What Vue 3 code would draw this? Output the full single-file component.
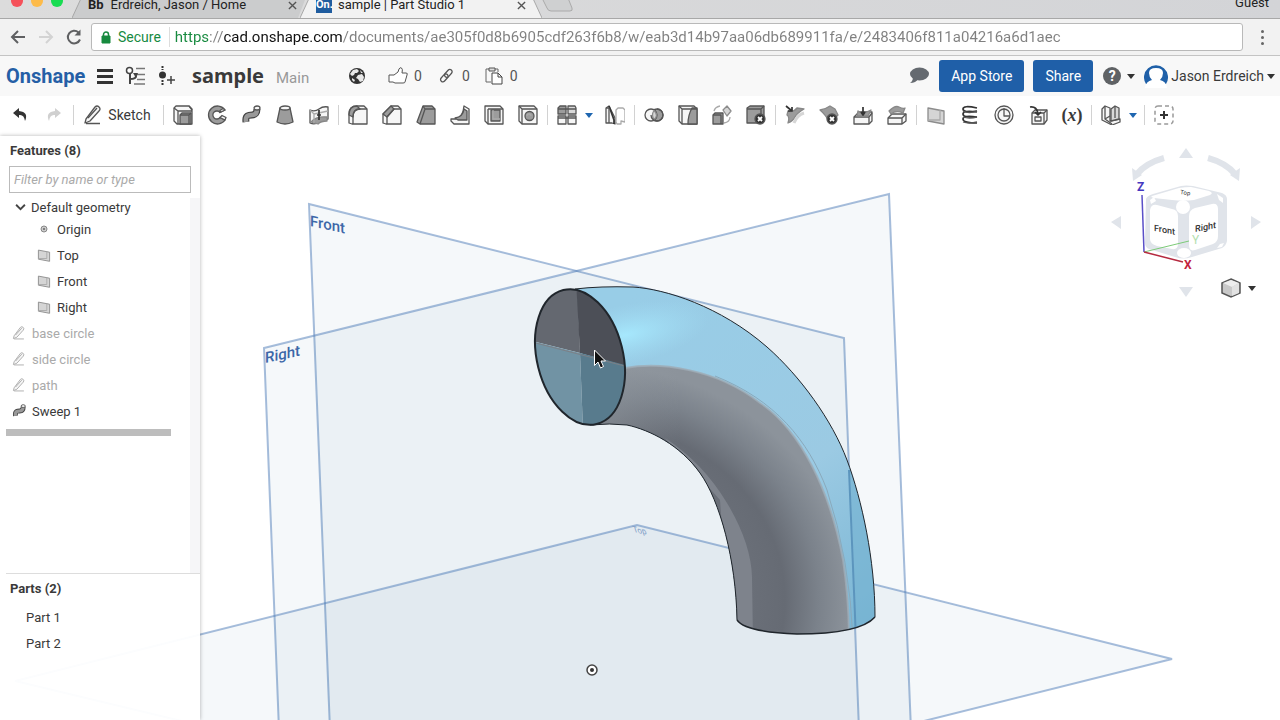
<script setup>
const sweep = [
  ['M5 17c-1-7 3-7 6-7s5-2 5-6', 'tube'],
  ['M5 17c-1-7 3-7 6-7s5-2 5-6', 'core'],
  ['M13 3a3 2 0 1 1 6 0a3 2 0 1 1-6 0', 'w'],
]
const pencil = [
  ['M3 14L12 2q2-2 4 0t0 4L7 16l-5 2z', 'w'],
  ['M5 13L14 3M3 18.500h14', 'n'],
]
const plane = [['M2 3l16 3v13L2 16z', 'p'], ['M2 15l12 0V5', 'lt']]
const groups = [
  {
    items: [
      { name: 'Extrude', paths: [['M1 3l2-2h13l3 3v15H4l-3-3z', 'w'], ['M1 3l4 3h14M5 6v13M16 1l3 4', 'n'], ['M7 10l2-2h9v11H7z', 'g'], ['M7 10h9v9M16 10l2-2', 'n']] },
      { name: 'Revolve', paths: [['M18 5A9 9 0 1 0 18 15L13 12.500A4 4 0 1 1 13 7.500z', 'g'], ['M18 5l-5 2.500v-2l3-2zM18 15l-5-2.500 2-2 4 2z', 'w']] },
      { name: 'Sweep', paths: sweep },
      { name: 'Loft', paths: [['M5 3l-3 14q8 4 16 0L15 3z', 'g'], ['M5 3a5 2 0 1 1 10 0a5 2 0 1 1-10 0', 'w']] },
      { name: 'Thicken', paths: [['M1 5q5 2 9-1t9-2v12q-5 0-9 3t-9 1z', 'w'], ['M2 17q5-6 16-5v4q-6 0-9 3z', 'gs'], ['M1 5l4 4 14-3M5 9v9', 'lt'], ['M10 5v10M8 10h4', 'b']] },
    ],
  },
  {
    items: [
      { name: 'Fillet', paths: [['M1 18V9q0-8 8-8h7l3 3v15H4z', 'w'], ['M1 10q0-9 8-9l3 3q-7 0-7 8z', 'g'], ['M5 19v-7q0-8 7-8h7', 'n']] },
      { name: 'Chamfer', paths: [['M1 18V9l8-8h7l3 3v15H4z', 'w'], ['M1 9l8-8 3 3-7 8z', 'g'], ['M5 19v-7l7-8h7', 'n']] },
      { name: 'Draft', paths: [['M7 1h9l3 3v15H4l-3-2z', 'g'], ['M9 4h10M9 4L4 19M7 1l2 3', 'n']] },
      { name: 'Rib', paths: [['M14 1l5 3v15H4l-3-3 0-2h5q7-2 8-13z', 'w'], ['M5 13q8-1 9-9l3 2v9H8z', 'g']] },
      { name: 'Shell', paths: [['M1 1h15l3 3v15H4l-3-3z', 'w'], ['M4 4h15M4 4v15', 'n'], ['M7 5h9v11H7z', 'g'], ['M9 5v9h7', 'lt']] },
      { name: 'Hole', paths: [['M1 1h15l3 3v15H4l-3-3z', 'w'], ['M4 4h15M4 4v15M1 1l3 3', 'n'], ['M7 11a4.500 4.500 0 1 1 9 0a4.500 4.500 0 1 1-9 0', 'g'], ['M9 11a2 2 0 1 1 4 0', 'lt']] },
    ],
  },
  {
    items: [
      { name: 'Linear pattern', caret: true, paths: [['M1 3l2-2h6v8H1z', 'g'], ['M11 1h7l1 2v6h-8z', 'p2'], ['M1 11h8v8H1zM11 11h8v8h-8z', 'w'], ['M1 4h18M1 13h18', 'n']] },
      { name: 'Mirror', paths: [['M1 3l3-2 6 12v6l-3-1H1z', 'w'], ['M4 1l5 14v4', 'b'], ['M1 3h3v15', 'n'], ['M11 17V5l2-2h5l2 2v12l-4-1v3h-4z', 'lt']] },
    ],
  },
  {
    items: [
      { name: 'Boolean', paths: [['M7 10a6 6 0 1 1 12 0a6 6 0 1 1-12 0', 'g'], ['M1 10a6 6 0 1 1 12 0a6 6 0 1 1-12 0', 'w'], ['M10 5.500q-3 4.500 0 9q5-4 0-9', 'p'], ['M7 10a6 6 0 1 0 6-6', 'n']] },
      { name: 'Split', paths: [['M1 1h15l3 3v15H4l-3-3z', 'w'], ['M14 3h5v16h-9q0-9 4-16z', 'g'], ['M1 1l3 3h15M4 4v15', 'n']] },
      { name: 'Transform', paths: [['M1 10l2-2h8v11H1z', 'g'], ['M1 10h8v9', 'n'], ['M11 5l4-4 4 5-4 5z', 'p'], ['M2 6q1-4 6-5M12 18q6-1 6-6', 'lt']] },
      { name: 'Delete part', paths: [['M1 3l3-2h14v14l-3 3H1z', 'g'], ['M1 4h14v14M15 4l3-3', 'n'], ['M9 14a5 5 0 1 1 10 0a5 5 0 1 1-10 0', 'k'], ['M12 12l4 4M16 12l-4 4', 'x']] },
    ],
  },
  {
    items: [
      { name: 'Modify fillet', paths: [['M3 6q5 2 9-3l7 1q-7 4-9 8t-7 6q2-6-1-8z', 'gs'], ['M9 18q3-8 10-10', 'lt2'], ['M1 1l6 5M7 2v4H3', 'b']] },
      { name: 'Delete face', paths: [['M1 5q6-1 10-4l5 3 3 6-8 8q-4-8-10-13z', 'gs'], ['M8 14a5 5 0 1 1 10 0a5 5 0 1 1-10 0', 'k'], ['M11 12l4 4M15 12l-4 4', 'x']] },
      { name: 'Move face', paths: [['M1 12l5-5h13v9l-3 3H1z', 'w'], ['M1 12h15v7M16 12l3-4', 'n'], ['M5 6q4 4 13-1l-3 6H4z', 'gs'], ['M10 2v7M8 7l2 3 2-3', 'b']] },
      { name: 'Replace face', paths: [['M1 13l4-4h14v7l-4 3H1z', 'w'], ['M1 13h14v6M15 13l4-4', 'n'], ['M2 6q6-6 10-4t6 1l-2 5q-7-3-12 1z', 'gs']] },
    ],
  },
  {
    items: [
      { name: 'Plane', paths: plane },
      { name: 'Helix', paths: [['M17 3Q3 0 3 4t14 2M17 7Q3 5 3 9t14 3M17 12Q3 10 3 14t14 4', 'b'], ['M3 6q6 3 14 0M3 12q6 2 14 0M3 17q6 2 14 0', 'n']] },
      { name: 'Measure', paths: [['M1 10a9 9 0 1 1 18 0a9 9 0 1 1-18 0', 'w'], ['M4 10a6 6 0 1 1 12 0a6 6 0 1 1-12 0M10 3v8h6', 'n']] },
      { name: 'Derived', paths: [['M4 8l3-3h12v10l-3 4H4z', 'w'], ['M4 8h12v11M16 8l3-3M7 12h6v4H7z', 'n'], ['M2 2q7-1 8 7M7 7l3 3 3-3', 'b']] },
      { name: 'Variable', text: '(x)' },
    ],
  },
  {
    items: [
      { name: 'Sheet metal', caret: true, paths: [['M1 4l3-3 5 2v13l10-2v3l-8 3-10-5z', 'w'], ['M10 4l4-3 4 2v11l-8 2z', 'p2'], ['M4 1v13l7 5M14 1v12M4 14l5-3', 'n']] },
    ],
  },
]
const tree = [
  { label: 'Origin', kind: 'origin' },
  { label: 'Top', kind: 'plane' },
  { label: 'Front', kind: 'plane' },
  { label: 'Right', kind: 'plane' },
]
const features = [
  { label: 'base circle', hidden: true, paths: pencil },
  { label: 'side circle', hidden: true, paths: pencil },
  { label: 'path', hidden: true, paths: pencil },
  { label: 'Sweep 1', hidden: false, paths: sweep },
]
const parts = ['Part 1', 'Part 2']
const url = 'https://cad.onshape.com/documents/ae305f0d8b6905cdf263f6b8/w/eab3d14b97aa06db689911fa/e/2483406f811a04216a6d1aec'
</script>

<template>
  <div class="page">
    <div class="tabstrip">
      <div class="lights"><i class="red"></i><i class="amber"></i><i class="green"></i></div>
      <div class="tab tab-back">
        <svg class="tab-shape" viewBox="0 0 236 28" preserveAspectRatio="none"><path d="M0 28L12 0H236L226 28z" fill="#cbcccd" /><path d="M0 28L12 0" stroke="#a5a5a5" fill="none" /></svg>
        <b class="bb">Bb</b><span class="tab-title">Erdreich, Jason / Home</span>
        <button class="close" aria-label="Close tab"><svg viewBox="0 0 10 10"><path d="M1 1l8 8M9 1L1 9" /></svg></button>
      </div>
      <div class="tab tab-front">
        <svg class="tab-shape" viewBox="0 0 242 28" preserveAspectRatio="none"><path d="M0 28L12 0H230L242 28z" fill="#f2f2f2" /><path d="M0 28L12 0M230 0L242 28" stroke="#a5a5a5" fill="none" /></svg>
        <span class="on">On.</span><span class="tab-title">sample | Part Studio 1</span>
        <button class="close" aria-label="Close tab"><svg viewBox="0 0 10 10"><path d="M1 1l8 8M9 1L1 9" /></svg></button>
      </div>
      <svg class="newtab" viewBox="0 0 36 20"><path d="M0 0l5 10q1 3 4 3h19q3 0 2-3L26 0z" fill="#cfd0d1" stroke="#aaa" /></svg>
      <span class="guest">Guest</span>
    </div>

    <div class="navbar">
      <button aria-label="Back"><svg viewBox="0 0 18 18"><path d="M16 9H3M9 3L3 9l6 6" stroke="#5f6062" /></svg></button>
      <button aria-label="Forward"><svg viewBox="0 0 18 18"><path d="M2 9h13M9 3l6 6-6 6" stroke="#d3d3d3" /></svg></button>
      <button aria-label="Reload"><svg viewBox="0 0 18 18"><path d="M15 11.500A6.300 6.300 0 1 1 13.500 4.500" stroke="#5f6062" /><path d="M15.500 1.500v6h-6z" fill="#5f6062" /></svg></button>
      <div class="address">
        <svg class="lock" viewBox="0 0 10 13"><path d="M1 5h8v7H1z" fill="#178a3f" stroke="#178a3f" /><path d="M2.500 5V3.500a2.500 2.500 0 0 1 5 0V5" fill="none" stroke="#178a3f" stroke-width="1.500" /></svg>
        <span class="secure">Secure</span>
        <input class="url" type="text" aria-label="Address" :value="url" spellcheck="false" />
      </div>
      <button class="menu" aria-label="Browser menu"><i></i><i></i><i></i></button>
    </div>

    <header class="header">
      <a class="logo" href="#">Onshape</a>
      <button class="ham" aria-label="Menu"><i></i><i></i><i></i></button>
      <button class="tree-btn" aria-label="Versions and history">
        <svg viewBox="0 0 22 20"><path d="M5 8v10M5 13q6 0 6-3" fill="none" stroke="#444" stroke-width="2" /><circle cx="4.500" cy="4.500" r="3" fill="#fff" stroke="#444" stroke-width="1.500" /><path d="M11 2.500h9M12 8.500h8M12 13.500h8M9 18h11" stroke="#777" stroke-width="1.500" /><path d="M8 7h5l-2 5z" fill="#444" /></svg>
      </button>
      <button class="insert-btn" aria-label="Create version">
        <svg viewBox="0 0 18 20"><path d="M4.500 0v4M4.500 14v5" stroke="#333" stroke-width="2" stroke-dasharray="2 1" /><circle cx="4.500" cy="9" r="3.500" fill="#333" /><path d="M9 14h8M13 10v8" stroke="#444" stroke-width="1.500" /></svg>
      </button>
      <h1>sample</h1>
      <span class="main-label">Main</span>
      <svg class="globe" viewBox="0 0 16 16"><circle cx="8" cy="8" r="8" fill="#333" /><path d="M4 2l4-1 2 2-2 2H6L5 7 3 8 1 6zM9 7l4-1 2 3-1 4-3 1-2-3-2-1zM11 2l3 3-2 0zM3 10l3 2-1 2-2-2z" fill="#e8e8e8" /></svg>
      <button class="stat"><svg width="20" height="18" viewBox="0 0 20 18"><path d="M1 8l5 0 4-3 1-3q1-2 2.500-1t.5 5h4q2 0 1 2l-2 7q0 1-2 1H7l-2-1H1z" fill="#fff" stroke="#555" /></svg>0</button>
      <button class="stat link"><svg width="14" height="18" viewBox="0 0 14 18"><g fill="none" stroke="#555" stroke-width="1.300" transform="translate(7 9) rotate(42)"><rect x="-2.300" y="-8" width="4.600" height="9" rx="2.300" /><rect x="-2.300" y="-2" width="4.600" height="9" rx="2.300" /></g></svg>0</button>
      <button class="stat clip"><svg width="18" height="18" viewBox="0 0 18 18"><path d="M5 2H1v13h5M9 2h4v3" fill="none" stroke="#666" /><path d="M4 1h6v3H4z" fill="#ddd" stroke="#555" /><path d="M7 6h6l4 4v7H7z" fill="#fff" stroke="#444" /><path d="M13 6v4h4" fill="none" stroke="#444" /></svg>0</button>
      <div class="spacer"></div>
      <button class="chat" aria-label="Comments"><svg viewBox="0 0 20 18"><ellipse cx="10.500" cy="7" rx="9.500" ry="6.500" fill="#656a70" /><path d="M4 10q0 4-3 6 6 0 8-4z" fill="#656a70" /></svg></button>
      <button class="primary store">App Store</button>
      <button class="primary share">Share</button>
      <button class="help" aria-label="Help"><span class="q">?</span><i class="caret"></i></button>
      <button class="user">
        <svg viewBox="0 0 24 24"><path d="M2 20A12 12 0 1 1 22 20z" fill="#1f60a8" /><path d="M1 24q1-7 7-8-3-3-3-7 0-5 7-5t7 5q0 4-3 7 6 1 7 8z" fill="#fff" /></svg>
        <span>Jason Erdreich</span><i class="caret"></i>
      </button>
    </header>

    <div class="toolbar">
      <button class="tool" aria-label="Undo"><svg viewBox="0 0 20 20"><path d="M9 3L3 8l6 5v-3q5-1 6 6 4-9-6-10z" fill="#333" /></svg></button>
      <button class="tool" aria-label="Redo"><svg viewBox="0 0 20 20"><path d="M11 3l6 5-6 5v-3q-5-1-6 6-4-9 6-10z" fill="#d0d0d0" /></svg></button>
      <i class="sep"></i>
      <button class="sketch"><svg class="ico" viewBox="0 0 20 20"><path v-for="(p, k) in pencil" :key="k" :d="p[0]" :class="p[1]" /></svg>Sketch</button>
      <template v-for="(g, i) in groups" :key="i">
        <i class="sep"></i>
        <template v-for="t in g.items" :key="t.name">
          <button class="tool" :aria-label="t.name">
            <span v-if="t.text" class="var">(<em>x</em>)</span>
            <svg v-else class="ico" viewBox="0 0 20 20"><path v-for="(p, k) in t.paths" :key="k" :d="p[0]" :class="p[1]" /></svg>
          </button>
          <button v-if="t.caret" class="drop" :aria-label="t.name + ' options'"><i class="caret blue"></i></button>
        </template>
      </template>
      <i class="sep"></i>
      <button class="tool" aria-label="Add custom features"><svg viewBox="0 0 20 20"><rect x="1" y="1" width="18" height="18" rx="3" fill="none" stroke="#999" stroke-width="1.500" stroke-dasharray="4 3" /><path d="M6 10h8M10 6v8" stroke="#333" stroke-width="2" /></svg></button>
    </div>

    <main class="workspace">
      <svg class="scene" viewBox="0 136 1280 584" preserveAspectRatio="xMidYMid slice">
        <defs>
          <radialGradient id="steel" gradientUnits="userSpaceOnUse" cx="0" cy="0" r="1" gradientTransform="translate(590 600) scale(260 235)">
            <stop offset=".55" stop-color="#6c717a" /><stop offset=".75" stop-color="#666b74" /><stop offset=".88" stop-color="#7b828b" /><stop offset="1" stop-color="#8c939b" />
          </radialGradient>
          <linearGradient id="sky" gradientUnits="userSpaceOnUse" x1="640" y1="290" x2="870" y2="620">
            <stop offset="0" stop-color="#98cde7" /><stop offset=".6" stop-color="#9bcae3" /><stop offset="1" stop-color="#7bb6d4" />
          </linearGradient>
          <radialGradient id="shine" gradientUnits="userSpaceOnUse" cx="0" cy="0" r="1" gradientTransform="translate(625 335) rotate(-12) scale(85 30)">
            <stop offset="0" stop-color="#a6e8fd" /><stop offset="1" stop-color="#a2dcf3" stop-opacity="0" />
          </radialGradient>
          <linearGradient id="glint" gradientUnits="userSpaceOnUse" x1="612" y1="0" x2="680" y2="0">
            <stop offset="0" stop-color="#949ba2" stop-opacity=".5" /><stop offset="1" stop-color="#949ba2" stop-opacity="0" />
          </linearGradient>
          <clipPath id="tubeClip"><path d="M575 289Q600 286 633 287C665 289 720 306 767 347C800 376 832 420 847 460S875 560 875 617Q860 634 797 634Q745 632 737 620C736 560 720 501 700 473C680 445 650 430 627 425Q610 423 590 425z" /></clipPath>
          <clipPath id="capClip"><ellipse cx="580" cy="357" rx="43" ry="69" transform="rotate(-14 580 357)" /></clipPath>
        </defs>
        <g class="planes">
          <path d="M309 204L844 338L859 730H330z" />
          <path d="M264 348L889 194L911 730H279z" />
          <path d="M15 681L637 525L1172 659L560 812z" />
        </g>
        <text class="plane-name" transform="translate(310 226) skewY(12)">Front</text>
        <text class="plane-name" transform="translate(265 363) skewY(-12)">Right</text>
        <text class="tiny" transform="translate(634 532) rotate(12) skewX(30)">Top</text>
        <g clip-path="url(#tubeClip)">
          <path d="M530 270H880V640H530z" fill="url(#sky)" />
          <path d="M530 270H880V440H530z" fill="url(#shine)" />
          <path d="M849 450L857 640H880V450z" fill="#77b3d2" opacity=".65" />
          <path d="M600 372L625 368C660 362 715 368 760 403C800 430 830 490 843 560Q849 600 849 640H720L580 430z" fill="url(#steel)" />
          <path d="M600 372L625 368Q665 362 700 373V450H580z" fill="url(#glint)" />
          <path d="M625 368C660 362 715 368 760 403C800 430 830 490 843 560Q849 600 849 640" fill="none" stroke="#9fabb5" stroke-width="2" opacity=".8" />
          <path d="M715 376C775 400 808 440 827 490Q850 560 853 640" fill="none" stroke="#8aa9bb" stroke-width="1" />
          <path d="M665 438Q703 463 727 503T752 577L753 640H730L720 500z" fill="#7e838c" />
          <path d="M849 470L856 640" stroke="#5c95bd" stroke-width="2" />
        </g>
        <g clip-path="url(#capClip)">
          <path d="M520 280H577L580 353L520 338z" fill="#646870" />
          <path d="M576 280H640V370L580 353z" fill="#4c4f57" />
          <path d="M520 338L580 353L583 430H520z" fill="#7193a4" />
          <path d="M580 353L640 369V430H583z" fill="#587b8d" />
          <path d="M520 339L640 370" stroke="#7c8087" fill="none" />
        </g>
        <g fill="none" stroke="#20262c">
          <path d="M575 289Q600 286 633 287C665 289 720 306 767 347C800 376 832 420 847 460S875 560 875 617" />
          <path d="M737 620C736 560 720 501 700 473C680 445 650 430 627 425Q610 423 590 425" />
          <path d="M737 620Q745 632 797 634Q860 634 875 617" stroke-width="1.500" />
          <ellipse cx="580" cy="357" rx="43" ry="69" transform="rotate(-14 580 357)" stroke-width="2" />
        </g>
        <path d="M594.500 350v15.500l3.500-3.500 2.500 6 3-1.500-2.500-5.500h4.500z" fill="#111" stroke="#fff" />
        <circle cx="592" cy="670" r="5" fill="#fff" stroke="#444" stroke-width="1.500" /><circle cx="592" cy="670" r="2" fill="#333" />
      </svg>

      <svg class="viewcube" viewBox="1104 140 164 164">
        <g fill="#e0e4ea">
          <path d="M1186 148l7 10h-14zM1186 297l7-10h-14zM1111 222l10-6v13zM1261 222l-10-6v13z" />
          <path d="M1133 181l-1-13 10 7zM1239 181l1-13-10 7z" />
          <path d="M1164 158q-18 5-27 16M1208 158q18 5 27 16" fill="none" stroke="#e0e4ea" stroke-width="6" />
          <path d="M1146 199q1-3 7-5l28-8q5-1 12 0l29 7q5 2 5 6v42q-1 5-5 7l-30 9q-9 3-17 0l-26-8q-4-2-4-6z" />
        </g>
        <g fill="#fff">
          <path d="M1152 196l27-8q6-1 12-1l18 4q5 2 1 4l-16 5q-10 1-22 0l-18-2q-4-1-2-2z" />
          <path d="M1150 210q1-6 7-5l15 4q6 1 6 7v28q0 6-6 5l-15-3q-7-2-7-7zM1189 216q0-6 6-8l17-4q6-1 6 5v27q0 6-5 8l-18 6q-6 2-6-5z" />
          <circle cx="1183" cy="207" r="7" /><ellipse cx="1184" cy="253" rx="7" ry="5" /><path d="M1150 200l4-3 2 4-5 3zM1217 194l6 4v5l-4-3zM1222 247l-5 1 3-4 4-1z" />
        </g>
        <text class="face" transform="translate(1154 231) skewY(10)">Front</text>
        <text class="face" transform="translate(1195 232) skewY(-11)">Right</text>
        <text class="face-top" transform="translate(1180 194) rotate(8)">Top</text>
        <path d="M1142 195L1144 252" stroke="#5a50c8" stroke-width="1.500" />
        <path d="M1144 252L1189 241" stroke="#7ccb78" />
        <path d="M1144 252L1183 262" stroke="#b52a40" stroke-width="1.500" />
        <text class="axis z" x="1137" y="191">Z</text><text class="axis y" x="1192" y="244">Y</text><text class="axis x" x="1184" y="269">X</text>
      </svg>
      <button class="shade" aria-label="Display mode">
        <svg viewBox="0 0 20 20"><path d="M10 1l9 4v10l-9 4-9-4V5z" fill="#c9c9c9" stroke="#555" stroke-width="1.500" /><path d="M2 5l8-3 8 3-7 4z" fill="#eee" /><path d="M11 9l7-4v10l-7 3z" fill="#e2e2e2" /></svg>
        <i class="caret"></i>
      </button>

      <aside class="sidebar">
        <section class="features">
          <h2>Features (8)</h2>
          <input class="filter" type="text" aria-label="Filter features" placeholder="Filter by name or type" />
          <div class="scroll">
            <div class="list">
              <button class="group"><svg viewBox="0 0 10 8"><path d="M1 1.500l4 4 4-4" fill="none" stroke="#444" stroke-width="1.700" /></svg>Default geometry</button>
              <ul>
                <li v-for="n in tree" :key="n.label" class="child">
                  <svg v-if="n.kind === 'plane'" class="ico small" viewBox="0 0 20 20"><path v-for="(p, k) in plane" :key="k" :d="p[0]" :class="p[1]" /></svg>
                  <svg v-else class="small" viewBox="0 0 14 14"><circle cx="7" cy="7" r="3" fill="#ccc" stroke="#888" /><circle cx="7" cy="7" r="1" fill="#666" /></svg>
                  {{ n.label }}
                </li>
                <li v-for="f in features" :key="f.label" class="feature" :class="{ off: f.hidden }">
                  <svg class="ico small" viewBox="0 0 20 20"><path v-for="(p, k) in f.paths" :key="k" :d="p[0]" :class="p[1]" /></svg>
                  {{ f.label }}
                </li>
              </ul>
              <div class="rollback"></div>
            </div>
            <div class="track"></div>
          </div>
        </section>
        <section class="parts">
          <h2>Parts (2)</h2>
          <ul><li v-for="p in parts" :key="p">{{ p }}</li></ul>
        </section>
      </aside>
    </main>
  </div>
</template>

<style>
body { margin: 0; overflow: hidden; }
</style>

<style scoped>
.page { height: 100vh; display: flex; flex-direction: column; font-family: Roboto, "Liberation Sans", sans-serif; font-size: 14px; color: #3a3a3a; background: #fff; }
button { border: 0; padding: 0; background: none; font: inherit; color: inherit; display: flex; align-items: center; justify-content: center; }
svg { display: block; flex: none; }
h1, h2, ul { margin: 0; padding: 0; list-style: none; }

.tabstrip { flex: none; height: 18px; display: flex; align-items: flex-end; overflow: hidden; background: linear-gradient(90deg, #dcdcdc, #d3d4d7); border-bottom: 1px solid #a8a8a8; font-size: 13px; line-height: 10px; color: #222; }
.lights { display: flex; gap: 8px; width: 64px; height: 18px; margin-left: 11px; }
.lights i { width: 12px; height: 12px; margin-top: -5px; border-radius: 50%; }
.red { background: #f5515a; } .amber { background: #fdbb4a; } .green { background: #19dc52; }
.tab { position: relative; flex: none; height: 26px; display: flex; align-items: center; box-sizing: border-box; }
.tab > * { position: relative; }
.tab > .tab-shape { position: absolute; inset: 0; width: 100%; height: 100%; }
.tab-back { width: 236px; padding: 0 11px 0 16px; margin-left: -3px; }
.tab-front { width: 242px; padding: 0 16px; margin-left: -8px; }
.bb { font-size: 13px; margin-right: 7px; }
.on { width: 16px; height: 16px; margin-right: 6px; background: #1f5c9f; color: #fff; font-size: 11px; line-height: 16px; font-weight: 700; text-align: center; }
.tab-title { flex: 1; white-space: nowrap; }
.close svg { width: 9px; height: 9px; fill: none; stroke: #555; stroke-width: 1.500; }
.newtab { width: 36px; height: 20px; }
.guest { margin: 0 11px 10px auto; font-size: 13px; }

.navbar { flex: none; height: 36px; display: flex; align-items: center; padding: 0 9px; background: #f2f2f2; border-bottom: 1px solid #c4c4c4; }
.navbar button { width: 18px; height: 28px; margin-right: 10px; }
.navbar button svg { width: 18px; height: 18px; fill: none; stroke-width: 2; }
.address { flex: 1; height: 26px; display: flex; align-items: center; padding-left: 9px; background: #fff; border: 1px solid #b9b9b9; border-radius: 3px; min-width: 0; margin-left: -2px; }
.lock { width: 10px; height: 13px; margin-right: 7px; }
.secure { color: #178a3f; font-size: 14px; padding-right: 8px; border-right: 1px solid #ddd; line-height: 20px; }
.url { flex: 1; min-width: 0; border: 0; outline: 0; padding: 0 0 0 5px; height: 24px; font-family: inherit; font-size: 15px; color: transparent; background: linear-gradient(90deg, #178a3f 0 39px, #808080 39px 53px, #111 53px 172px, #808080 172px); -webkit-background-clip: text; background-clip: text; }
.navbar .menu { width: 18px; margin: 0 0 0 10px; flex-direction: column; gap: 3px; }
.menu i { width: 3px; height: 3px; border-radius: 50%; background: #666; }

.header { flex: none; height: 40px; display: flex; align-items: center; padding: 0 5px 0 6px; background: #f8f8f8; white-space: nowrap; }
.logo { width: 79px; color: #255fa6; font-size: 20px; font-weight: 700; text-decoration: none; }
.ham { width: 16px; margin-left: 12px; flex-direction: column; gap: 3px; }
.ham i { width: 16px; height: 3px; background: #333; }
.tree-btn { margin-left: 12px; } .tree-btn svg { width: 22px; height: 20px; }
.insert-btn { margin-left: 11px; } .insert-btn svg { width: 18px; height: 20px; }
h1 { width: 75px; margin-left: 16px; font-family: "Noto Sans", sans-serif; font-size: 20px; line-height: 28px; font-weight: 700; }
.main-label { width: 73px; margin-left: 9px; color: #999; font-size: 15px; padding-top: 4px; box-sizing: border-box; }
.globe { width: 16px; height: 16px; }
.stat { margin-left: 23px; gap: 6px; font-size: 14px; color: #555; }
.stat.link { margin-left: 17px; gap: 9px; } .stat.clip { margin-left: 15px; gap: 7px; }
.spacer { flex: 1; }
.chat svg { width: 20px; height: 18px; }
.primary { height: 32px; margin-left: 10px; background: #1f5fa8; border-radius: 3px; color: #fff; }
.store { width: 85px; } .share { width: 60px; margin-left: 9px; }
.help { margin-left: 10px; gap: 6px; }
.q { width: 18px; height: 18px; border-radius: 50%; background: #5f6265; color: #fff; font-weight: 700; font-size: 14px; line-height: 18px; }
.caret { width: 0; height: 0; border: 4px solid transparent; border-top: 5px solid #333; border-bottom: 0; }
.caret.blue { border-top-color: #1f66b0; }
.user { margin-left: 9px; gap: 3px; } .user svg { width: 24px; height: 24px; }

.toolbar { flex: none; height: 38px; padding: 0 3px 2px; display: flex; align-items: center; background: #fff; overflow: hidden; }
.tool { flex: none; width: 34px; height: 34px; }
.tool svg, .sketch svg { width: 20px; height: 20px; }
.drop { flex: none; width: 14px; height: 34px; padding-right: 4px; box-sizing: border-box; }
.sep { flex: none; width: 1px; height: 20px; margin: 0 2px; background: #d2d2d2; }
.sketch { flex: none; width: 85px; height: 34px; padding-right: 3px; box-sizing: border-box; gap: 5px; }
.var { font-family: "Liberation Serif", serif; font-weight: 700; font-size: 18px; }
.ico path { stroke: #555; stroke-width: 1.300; stroke-linejoin: round; fill: none; }
.ico .g { fill: #9c9c9c; } .ico .w { fill: #f6f6f6; } .ico .gs { fill: #9b9b9b; stroke: #888; }
.ico .p { fill: #d5d5d5; stroke: #8c8c8c; } .ico .p2 { fill: #d9d9d9; } .ico .lt { stroke: #aaa; } .ico .lt2 { stroke: #d6d6d6; stroke-width: 3; }
.ico .b { stroke: #333; stroke-width: 1.700; } .ico .k { fill: #333; } .ico .x { stroke: #fff; stroke-width: 1.800; }
.ico .tube { stroke: #444; stroke-width: 7; } .ico .core { stroke: #999; stroke-width: 4.500; }

.workspace { flex: 1; min-height: 0; display: grid; grid-template: minmax(0, 1fr) / minmax(0, 1fr); }
.workspace > * { grid-area: 1 / 1; }
.scene { width: 100%; height: 100%; }
.planes path { fill: rgba(60, 112, 160, 0.05); stroke: rgba(78, 124, 184, 0.5); stroke-width: 2; }
.plane-name { font-size: 15px; font-weight: 500; fill: #3c67a8; font-family: Roboto, sans-serif; }
.tiny { font-size: 8px; fill: #7c9bc6; }
.viewcube { width: 164px; height: 164px; justify-self: end; margin: 4px 12px 0 0; }
.face { font-size: 9px; font-weight: 500; fill: #333; } .face-top { font-size: 6px; fill: #333; }
.axis { font-size: 12px; font-weight: 700; }
.axis.z { fill: #4638c0; } .axis.y { fill: #b4e0b0; font-weight: 400; } .axis.x { fill: #c3223c; }
.shade { justify-self: end; align-self: start; margin: 142px 24px 0 0; gap: 7px; }
.shade svg { width: 20px; height: 20px; }

.sidebar { width: 200px; display: flex; flex-direction: column; font-size: 13px; background: rgba(255, 255, 255, 0.96); box-shadow: 0 0 4px rgba(0, 0, 0, 0.3); }
h2 { font-size: 13px; font-weight: 700; line-height: 30px; padding-left: 10px; }
.features { flex: 1; min-height: 0; display: flex; flex-direction: column; }
.filter { flex: none; height: 27px; margin: 0 9px 5px; box-sizing: border-box; border: 1px solid #bbb; background: #fff; padding: 0 4px; font-family: inherit; font-size: 13px; }
.filter::placeholder { color: #aaa; font-style: italic; opacity: 1; }
.scroll { flex: 1; min-height: 0; display: flex; }
.list { flex: 1; }
.track { width: 10px; background: #f6f6f8; }
.group { height: 18px; margin-left: 15px; gap: 5px; } .group svg { width: 11px; height: 9px; }
li { display: flex; align-items: center; height: 26px; }
.small { width: 14px; height: 14px; }
.child { padding-left: 37px; gap: 6px; }
.feature { padding-left: 12px; gap: 6px; }
.off { color: #aaa; } .off .ico path { stroke: #aaa; }
.rollback { height: 7px; margin: 5px 19px 0 6px; background: #bdbdbd; }
.parts { flex: none; height: 147px; box-sizing: border-box; border-top: 1px solid #ddd; margin-left: 6px; }
.parts h2 { padding-left: 4px; } .parts li { padding-left: 20px; }
</style>
